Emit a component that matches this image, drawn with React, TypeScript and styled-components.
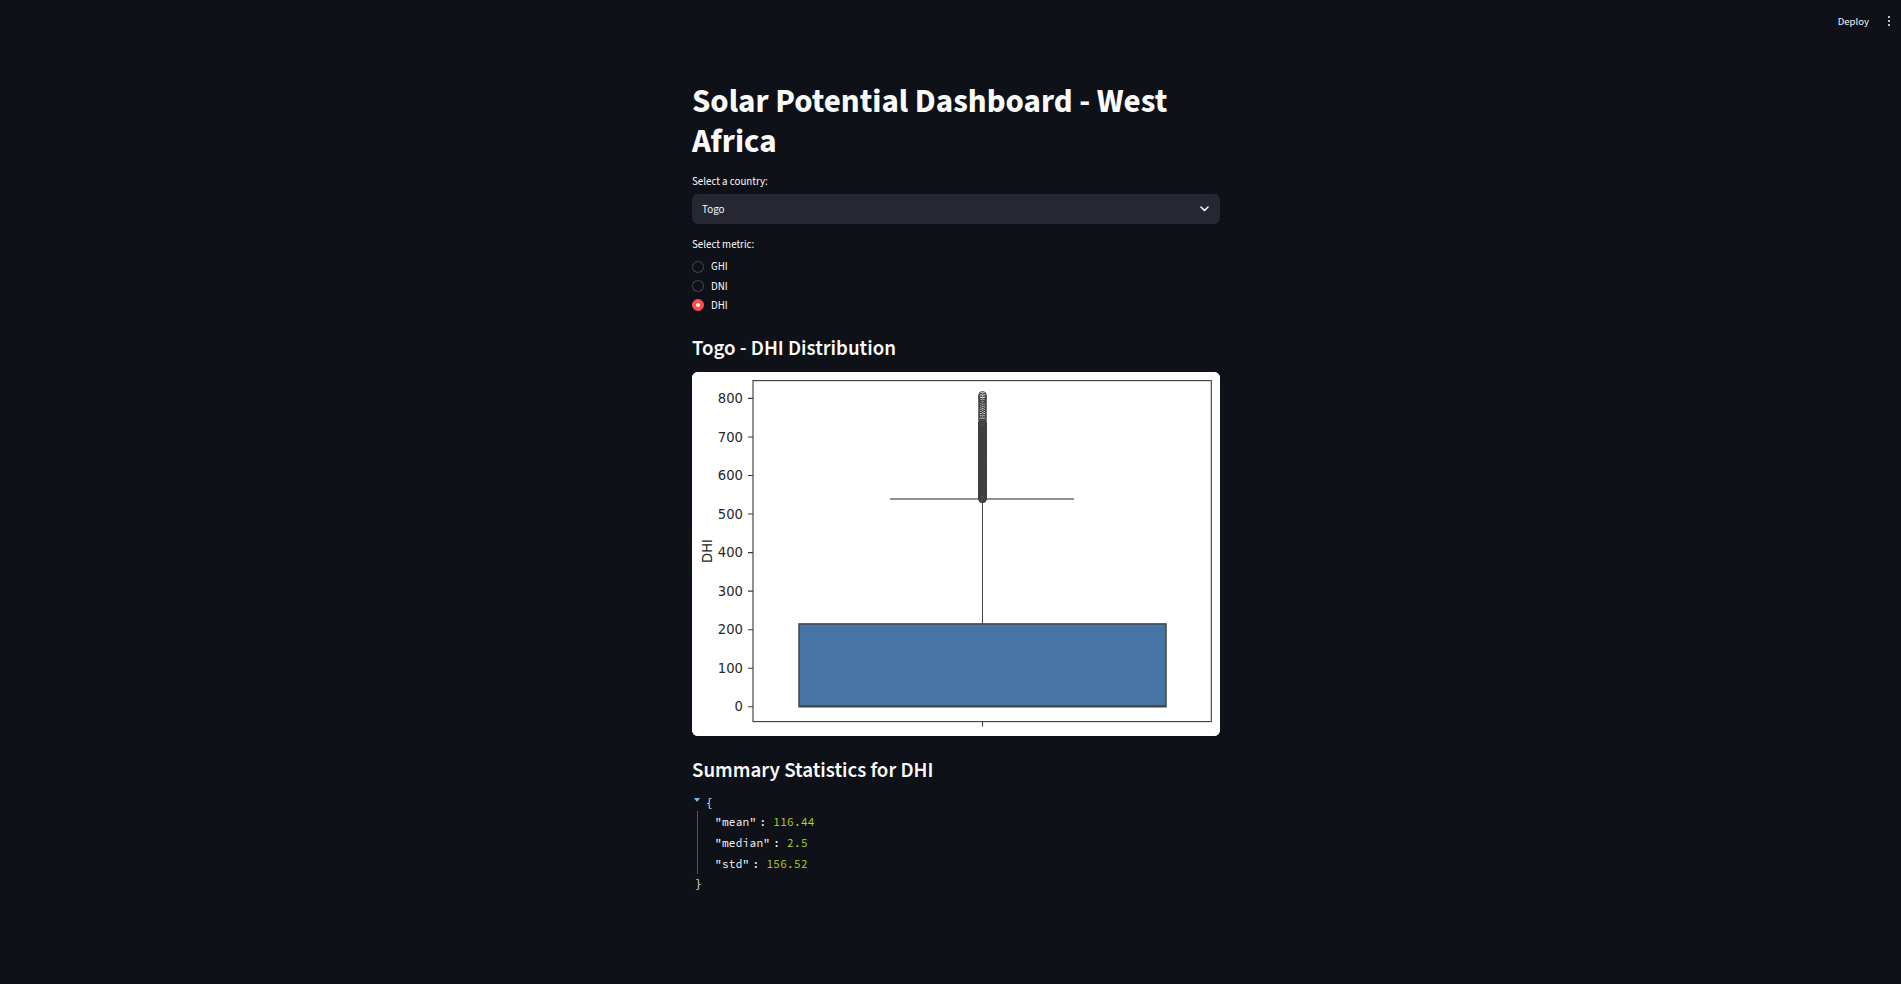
import React from "react";
import styled, { createGlobalStyle } from "styled-components";

const FONT = `"Source Sans 3", "Source Sans Pro", "Lato", "Noto Sans", sans-serif`;
const MONO = `"Source Code Pro", "DejaVu Sans Mono", "Liberation Mono", monospace`;

const GlobalStyle = createGlobalStyle`
  html, body { margin: 0; padding: 0; background: #0e1117; }
  body { color: #fafafa; font-family: ${FONT}; -webkit-font-smoothing: antialiased; }
  * { box-sizing: border-box; }
`;

const Page = styled.div`
  min-height: 984px;
  background: #0e1117;
`;

const Header = styled.header`
  height: 42px;
  display: flex;
  justify-content: flex-end;
  align-items: center;
  padding-right: 11px;
  gap: 19px;
`;

const DeployText = styled.span`
  font-size: 10.7px;
  color: #fafafa;
`;

const MoreDots = styled.span`
  display: flex;
  flex-direction: column;
  gap: 2px;
  width: 2px;
  & > i { display: block; width: 2px; height: 2px; border-radius: 1px; background: #fafafa; }
`;

const Main = styled.main`
  width: 528px;
  margin-left: calc(50% - 258.5px);
  padding-top: 40px;
  padding-bottom: 80px;
  display: flex;
  flex-direction: column;
`;

const Title = styled.h1`
  margin: 0;
  font-size: 33px;
  line-height: 39.6px;
  font-weight: 700;
`;

const Label = styled.div<{ $mt: number }>`
  margin-top: ${(p) => p.$mt}px;
  height: 18px;
  line-height: 18px;
  font-size: 10.9px;
  margin-bottom: 3px;
`;

const SelectBox = styled.div`
  height: 30px;
  background: #262730;
  border-radius: 6px;
  display: flex;
  align-items: center;
  justify-content: space-between;
  padding: 0 11px 0 10px;
  font-size: 11px;
`;

const RadioGroup = styled.div`
  display: flex;
  flex-direction: column;
  margin-top: 0px;
`;

const RadioRow = styled.div`
  height: 19.3px;
  display: flex;
  align-items: center;
  gap: 7px;
  font-size: 10.9px;
`;

const RadioDot = styled.span<{ $on: boolean }>`
  width: 12px;
  height: 12px;
  border-radius: 50%;
  display: flex;
  align-items: center;
  justify-content: center;
  background: ${(p) => (p.$on ? "#ff4b4b" : "#0e1117")};
  border: 1px solid ${(p) => (p.$on ? "#ff4b4b" : "rgba(250,250,250,0.22)")};
  &::after {
    content: "";
    display: ${(p) => (p.$on ? "block" : "none")};
    width: 4px;
    height: 4px;
    border-radius: 50%;
    background: #fff;
  }
`;

const SubHeader = styled.h3<{ $mt: number }>`
  margin: ${(p) => p.$mt}px 0 0 0;
  font-size: 21px;
  line-height: 25.2px;
  font-weight: 600;
`;

const ChartCard = styled.div`
  margin-top: 11px;
  width: 528px;
  height: 364px;
  background: #fff;
  border-radius: 6px;
  overflow: hidden;
`;

const Json = styled.div`
  margin-top: 11px;
  font-family: ${MONO};
  font-size: 11px;
  color: #fafafa;
`;

const JsonOpen = styled.div`
  height: 17px;
  display: flex;
  align-items: center;
  gap: 6px;
  padding-left: 2px;
`;

const Caret = styled.span`
  width: 0;
  height: 0;
  border-left: 3px solid transparent;
  border-right: 3px solid transparent;
  border-top: 4px solid #6fc3e8;
  margin-top: -6px;
`;

const JsonRows = styled.div`
  margin-left: 5px;
  border-left: 1px solid rgba(250, 250, 250, 0.3);
  padding-left: 17px;
`;

const JsonRow = styled.div`
  height: 21px;
  display: flex;
  align-items: center;
  white-space: pre;
  letter-spacing: 0.3px;
`;

const Colon = styled.span`
  margin: 0 7px 0 3px;
`;

const Num = styled.span`
  color: #b7d81e;
`;

const JsonClose = styled.div`
  height: 20px;
  display: flex;
  align-items: center;
  padding-left: 3px;
`;

const Chevron = () => (
  <svg width="9" height="6" viewBox="0 0 9 6">
    <path d="M1 1 L4.5 4.5 L8 1" fill="none" stroke="#fafafa" strokeWidth="1.6" strokeLinecap="round" strokeLinejoin="round" />
  </svg>
);

const ys = (v: number) => 334.8 - v * 0.3855;

const outliers: number[] = (() => {
  const a: number[] = [];
  for (let v = 539; v <= 738; v += 1.5) a.push(v);
  [744, 749, 755, 760, 766, 771, 776, 781, 786, 791, 796, 800, 804, 808].forEach((v) => a.push(v));
  return a;
})();

const BoxChart = () => (
  <svg width="528" height="364" viewBox="0 0 528 364">
    <rect x="0" y="0" width="528" height="364" fill="#fff" />
    <rect x="107" y={ys(215)} width="367" height={ys(0) - ys(215)} fill="#4674a4" stroke="#474747" strokeWidth="1.5" />
    <line x1="107" x2="474" y1={ys(2.5)} y2={ys(2.5)} stroke="#474747" strokeWidth="1.5" />
    <line x1="290.5" x2="290.5" y1={ys(215)} y2={ys(539)} stroke="#444" strokeWidth="1" />
    <line x1="198" x2="382" y1={ys(539)} y2={ys(539)} stroke="#6a6a6a" strokeWidth="1.6" />
    {outliers.map((v, i) => (
      <circle key={i} cx="290.5" cy={ys(v)} r="3.8" fill="none" stroke="#3f3f3f" strokeWidth="1" />
    ))}
    <rect x="61" y="8.6" width="458.3" height="341" fill="none" stroke="#3a3a3a" strokeWidth="1.1" />
    {[0, 100, 200, 300, 400, 500, 600, 700, 800].map((v) => (
      <g key={v}>
        <line x1="56" x2="61" y1={ys(v)} y2={ys(v)} stroke="#3a3a3a" strokeWidth="1.1" />
        <text x="51" y={ys(v)} dy="4.6" textAnchor="end" fontFamily="DejaVu Sans, sans-serif" fontSize="13.2" fill="#262626">
          {v}
        </text>
      </g>
    ))}
    <line x1="290.5" x2="290.5" y1="349.6" y2="354.6" stroke="#3a3a3a" strokeWidth="1.1" />
    <text x="0" y="0" transform="translate(19.5 179) rotate(-90)" textAnchor="middle" fontFamily="DejaVu Sans, sans-serif" fontSize="13.2" fill="#262626">
      DHI
    </text>
  </svg>
);

export default function App() {
  return (
    <Page>
      <GlobalStyle />
      <Header>
        <DeployText>Deploy</DeployText>
        <MoreDots>
          <i />
          <i />
          <i />
        </MoreDots>
      </Header>
      <Main>
        <Title>Solar Potential Dashboard - West Africa</Title>
        <Label $mt={12}>Select a country:</Label>
        <SelectBox>
          <span>Togo</span>
          <Chevron />
        </SelectBox>
        <Label $mt={12}>Select metric:</Label>
        <RadioGroup>
          {["GHI", "DNI", "DHI"].map((o) => (
            <RadioRow key={o}>
              <RadioDot $on={o === "DHI"} />
              <span>{o}</span>
            </RadioRow>
          ))}
        </RadioGroup>
        <SubHeader $mt={21}>Togo - DHI Distribution</SubHeader>
        <ChartCard>
          <BoxChart />
        </ChartCard>
        <SubHeader $mt={22}>Summary Statistics for DHI</SubHeader>
        <Json>
          <JsonOpen>
            <Caret />
            <span>{"{"}</span>
          </JsonOpen>
          <JsonRows>
            <JsonRow>
              <span>"mean"</span>
              <Colon>:</Colon>
              <Num>116.44</Num>
            </JsonRow>
            <JsonRow>
              <span>"median"</span>
              <Colon>:</Colon>
              <Num>2.5</Num>
            </JsonRow>
            <JsonRow>
              <span>"std"</span>
              <Colon>:</Colon>
              <Num>156.52</Num>
            </JsonRow>
          </JsonRows>
          <JsonClose>{"}"}</JsonClose>
        </Json>
      </Main>
    </Page>
  );
}
